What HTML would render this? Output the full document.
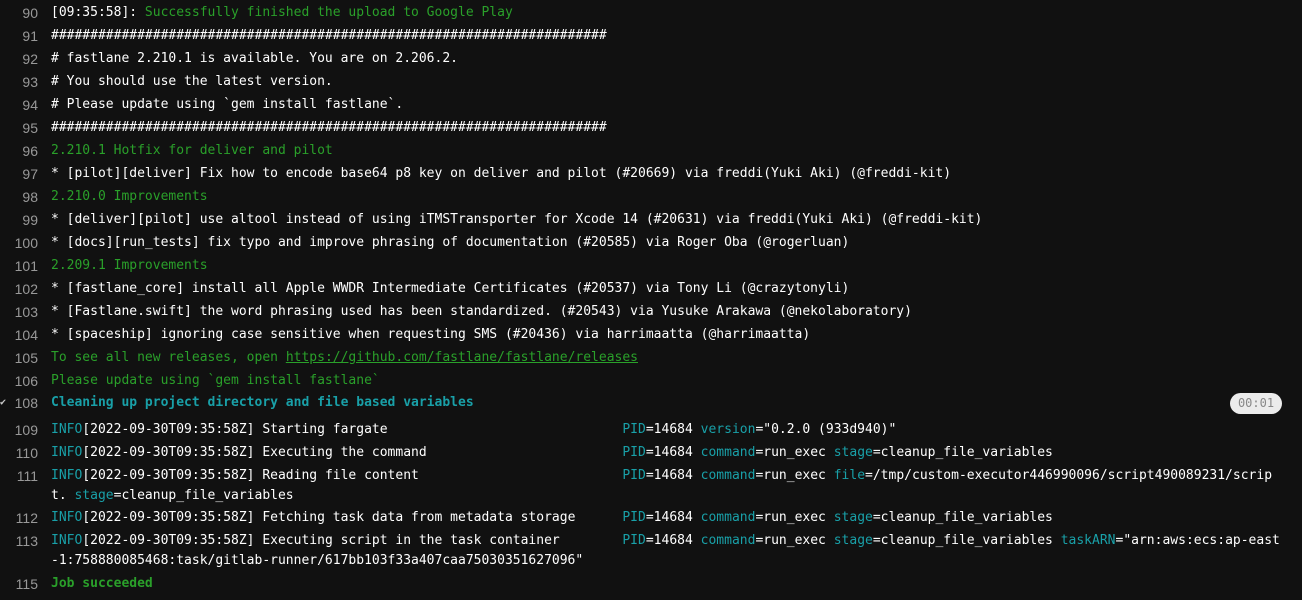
<!DOCTYPE html><html><head><style>
body{margin:0;background:#111;width:1302px;height:599px;overflow:hidden;font:13px/20px "DejaVu Sans Mono","Liberation Mono",monospace;color:#fff}
.w{position:absolute;left:0;top:1px;width:1302px;height:599px}
.l{position:absolute;left:0;white-space:pre}
.n{position:absolute;left:0;width:38px;text-align:right;color:#999;font-family:"Liberation Sans",sans-serif;font-size:14px}
.t{position:absolute;left:51px;white-space:pre}
.g{color:#2aa02a}.c{color:#19a0a8}.b{font-weight:bold}.u{text-decoration:underline}
.badge{position:absolute;left:1230px;top:392px;width:52px;height:21px;border-radius:11px;background:#ececec;color:#888;font-size:12px;line-height:21px;text-align:center}
</style></head><body><div class="w">
<div class="l" style="top:2px"><span class="n">90</span><span class="t">[09:35:58]: <span class="g">Successfully finished the upload to Google Play</span></span></div>
<div class="l" style="top:25px"><span class="n">91</span><span class="t">#######################################################################</span></div>
<div class="l" style="top:48px"><span class="n">92</span><span class="t"># fastlane 2.210.1 is available. You are on 2.206.2.</span></div>
<div class="l" style="top:71px"><span class="n">93</span><span class="t"># You should use the latest version.</span></div>
<div class="l" style="top:94px"><span class="n">94</span><span class="t"># Please update using `gem install fastlane`.</span></div>
<div class="l" style="top:117px"><span class="n">95</span><span class="t">#######################################################################</span></div>
<div class="l" style="top:140px"><span class="n">96</span><span class="t g">2.210.1 Hotfix for deliver and pilot</span></div>
<div class="l" style="top:163px"><span class="n">97</span><span class="t">* [pilot][deliver] Fix how to encode base64 p8 key on deliver and pilot (#20669) via freddi(Yuki Aki) (@freddi-kit)</span></div>
<div class="l" style="top:186px"><span class="n">98</span><span class="t g">2.210.0 Improvements</span></div>
<div class="l" style="top:209px"><span class="n">99</span><span class="t">* [deliver][pilot] use altool instead of using iTMSTransporter for Xcode 14 (#20631) via freddi(Yuki Aki) (@freddi-kit)</span></div>
<div class="l" style="top:232px"><span class="n">100</span><span class="t">* [docs][run_tests] fix typo and improve phrasing of documentation (#20585) via Roger Oba (@rogerluan)</span></div>
<div class="l" style="top:255px"><span class="n">101</span><span class="t g">2.209.1 Improvements</span></div>
<div class="l" style="top:278px"><span class="n">102</span><span class="t">* [fastlane_core] install all Apple WWDR Intermediate Certificates (#20537) via Tony Li (@crazytonyli)</span></div>
<div class="l" style="top:301px"><span class="n">103</span><span class="t">* [Fastlane.swift] the word phrasing used has been standardized. (#20543) via Yusuke Arakawa (@nekolaboratory)</span></div>
<div class="l" style="top:324px"><span class="n">104</span><span class="t">* [spaceship] ignoring case sensitive when requesting SMS (#20436) via harrimaatta (@harrimaatta)</span></div>
<div class="l" style="top:347px"><span class="n">105</span><span class="t g">To see all new releases, open <span class="u">https://github.com/fastlane/fastlane/releases</span></span></div>
<div class="l" style="top:370px"><span class="n">106</span><span class="t g">Please update using `gem install fastlane`</span></div>
<div class="l" style="top:392px"><span style="position:absolute;left:0;top:0;color:#ccc;font-size:10px">&#x2714;</span><span class="n">108</span><span class="t c b">Cleaning up project directory and file based variables</span></div>
<div class="badge">00:01</div>
<div class="l" style="top:419px"><span class="n">109</span><span class="t"><span class="c">INFO</span>[2022-09-30T09:35:58Z] Starting fargate                              <span class="c">PID</span>=14684 <span class="c">version</span>="0.2.0 (933d940)"</span></div>
<div class="l" style="top:442px"><span class="n">110</span><span class="t"><span class="c">INFO</span>[2022-09-30T09:35:58Z] Executing the command                         <span class="c">PID</span>=14684 <span class="c">command</span>=run_exec <span class="c">stage</span>=cleanup_file_variables</span></div>
<div class="l" style="top:465px"><span class="n">111</span><span class="t"><span class="c">INFO</span>[2022-09-30T09:35:58Z] Reading file content                          <span class="c">PID</span>=14684 <span class="c">command</span>=run_exec <span class="c">file</span>=/tmp/custom-executor446990096/script490089231/scrip
t. <span class="c">stage</span>=cleanup_file_variables</span></div>
<div class="l" style="top:507px"><span class="n">112</span><span class="t"><span class="c">INFO</span>[2022-09-30T09:35:58Z] Fetching task data from metadata storage      <span class="c">PID</span>=14684 <span class="c">command</span>=run_exec <span class="c">stage</span>=cleanup_file_variables</span></div>
<div class="l" style="top:530px"><span class="n">113</span><span class="t"><span class="c">INFO</span>[2022-09-30T09:35:58Z] Executing script in the task container        <span class="c">PID</span>=14684 <span class="c">command</span>=run_exec <span class="c">stage</span>=cleanup_file_variables <span class="c">taskARN</span>="arn:aws:ecs:ap-east
-1:758880085468:task/gitlab-runner/617bb103f33a407caa75030351627096"</span></div>
<div class="l" style="top:573px"><span class="n">115</span><span class="t g b">Job succeeded</span></div>
</div></body></html>
